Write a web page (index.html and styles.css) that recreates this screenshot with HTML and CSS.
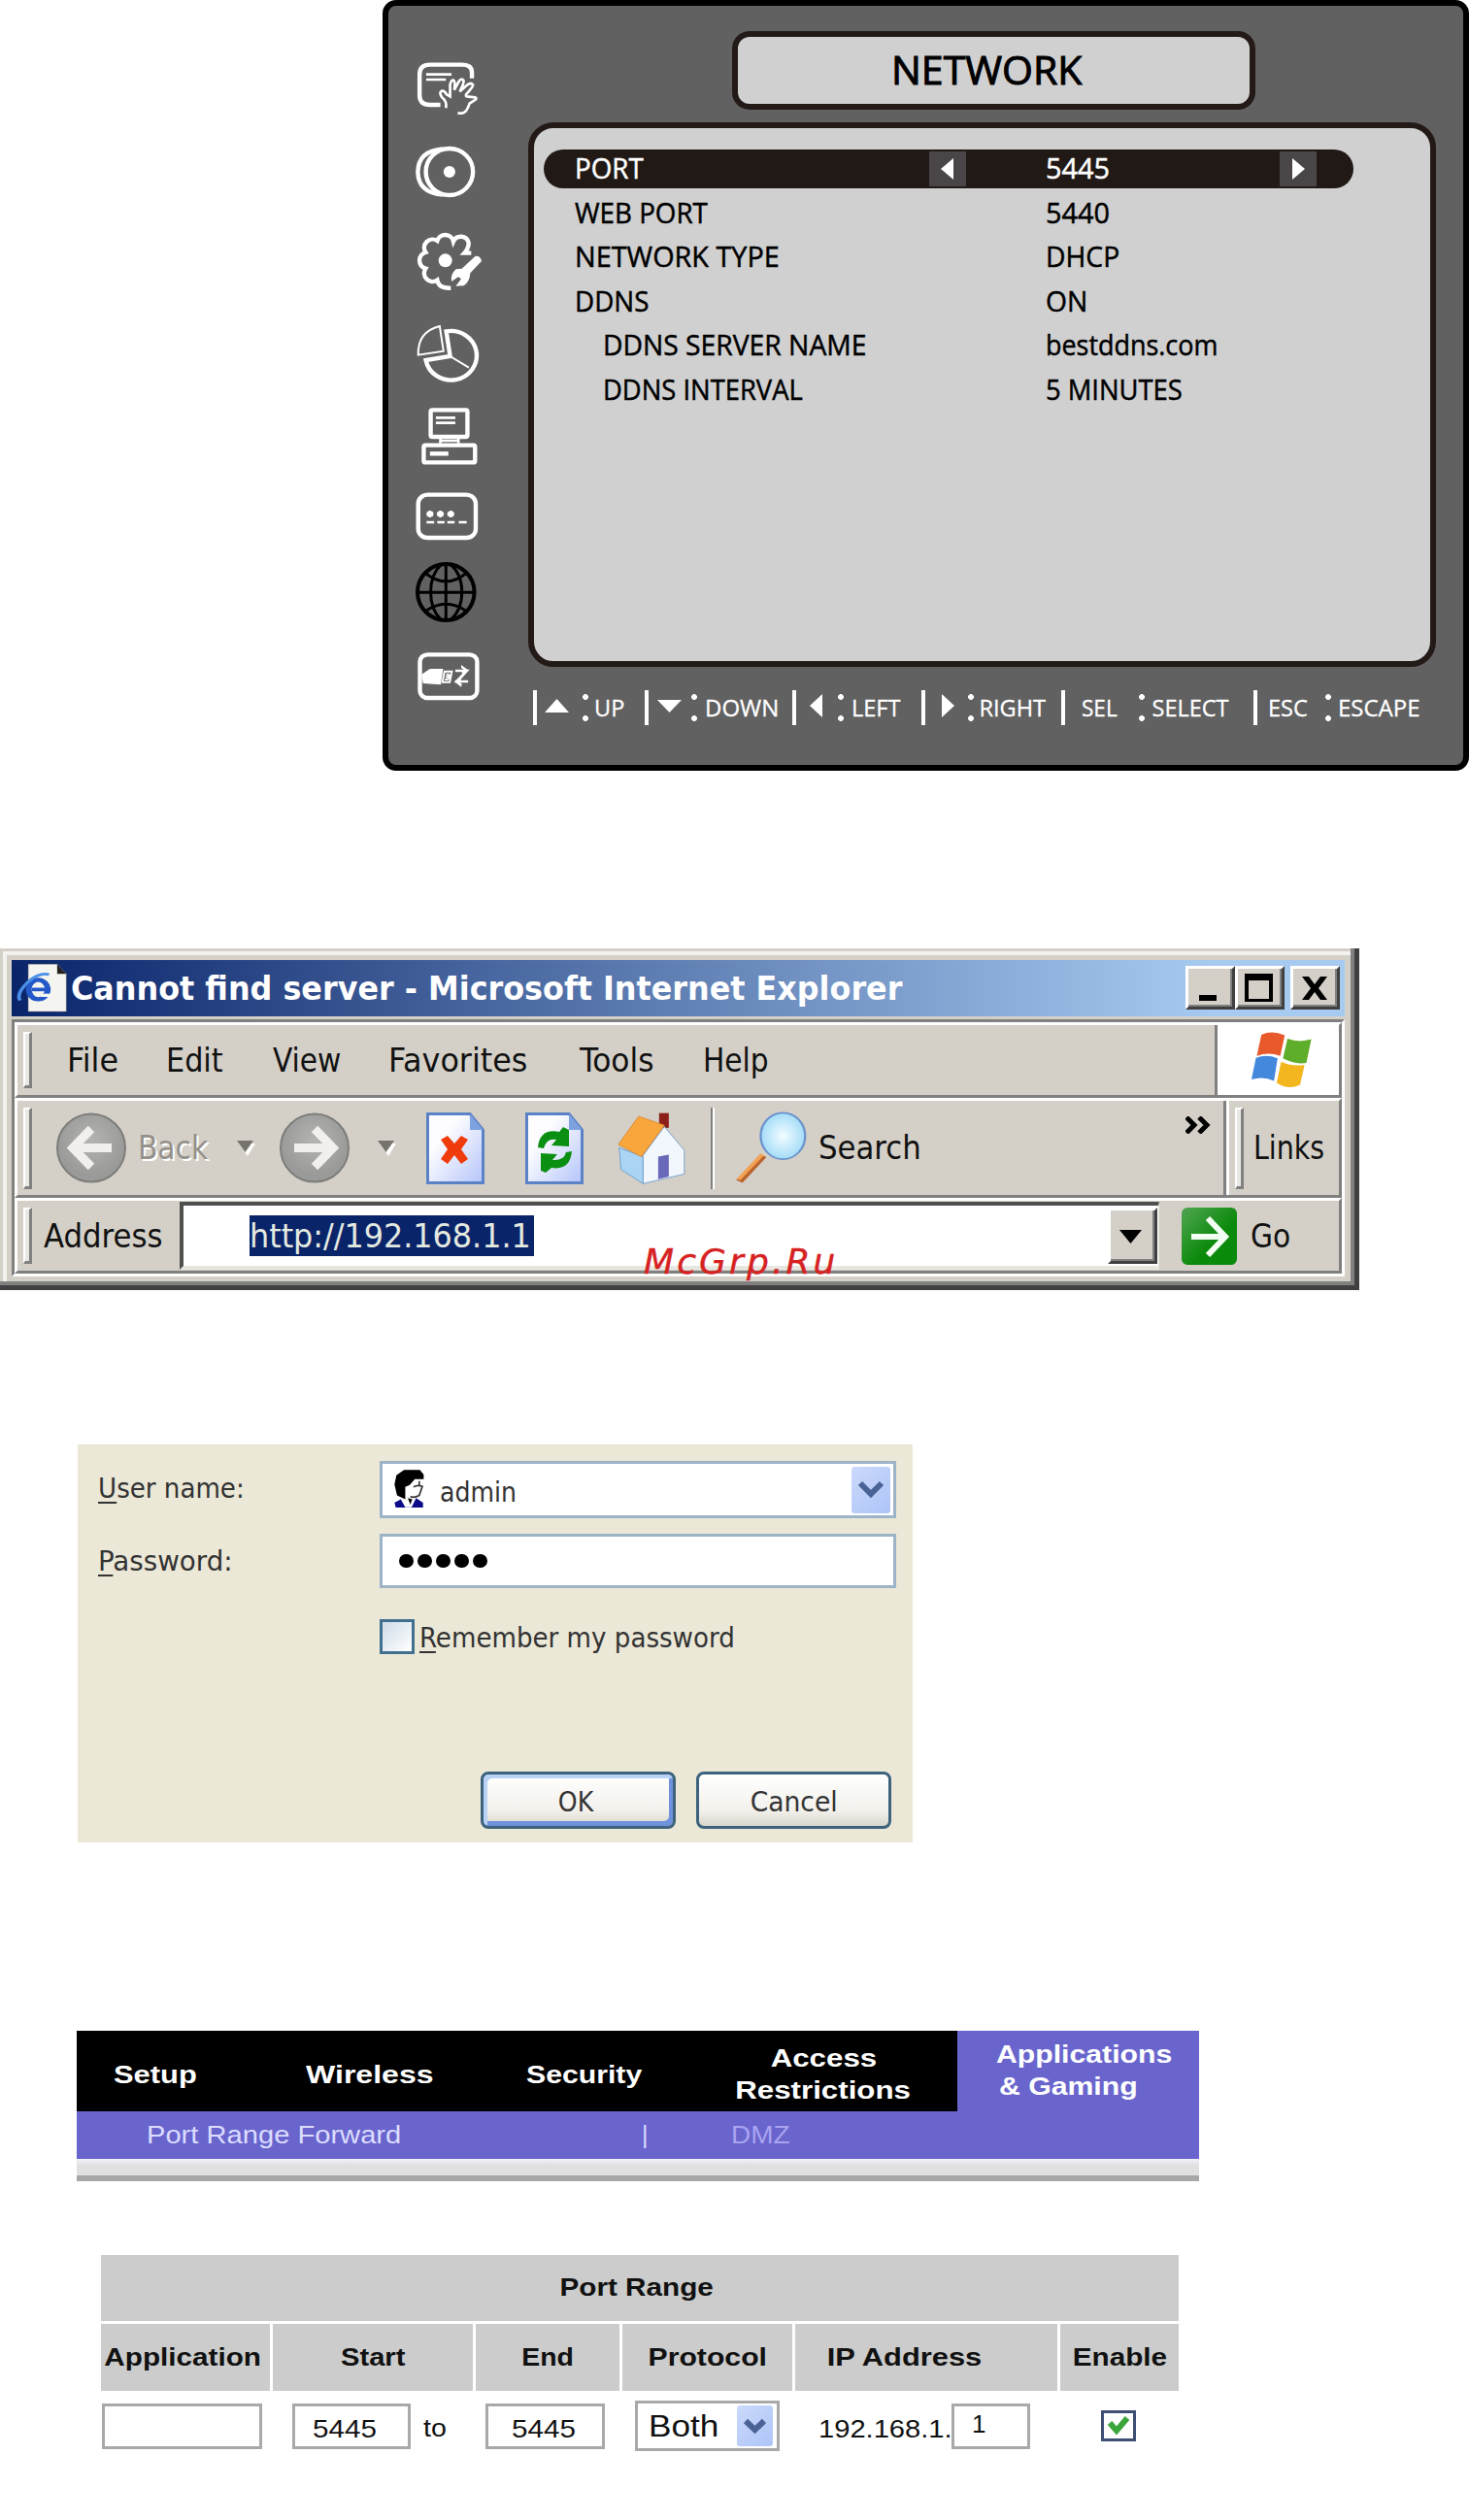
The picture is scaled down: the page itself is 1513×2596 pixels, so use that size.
FILE: index.html
```
<!DOCTYPE html>
<html>

	<head>
		<meta charset="UTF-8">
		<title>Network setup</title>
		<link rel="stylesheet" href="styles.css">
	</head>

	<body>
		<div id="osd">
			<div class="side">
				<svg class="ico i1" viewBox="100 189 210 171" preserveAspectRatio="none">
					<path class="w4" d="M271 242V224Q271 200 242 200H150Q120 200 120 230V295Q120 324 150 324H180" />
					<path class="w3" d="M139 230H212M139 246H196" />
					<path class="w3" d="M196 334Q200 314 184 300Q175 284 184 281Q192 279 198 292L208 298V262Q211 246 218 248Q224 252 220 278L233 252Q241 240 247 249Q249 255 236 283L258 262Q268 254 274 262Q276 267 254 292Q252 300 262 299L280 301Q288 305 277 311L264 320Q256 348 243 350H230" />
				</svg>
				<svg class="ico i2" viewBox="100 450 210 162" preserveAspectRatio="none">
					<ellipse class="w4" cx="206" cy="531" rx="68" ry="72" />
					<path class="w4" d="M187 460Q116 466 115 531Q116 596 187 602" />
					<ellipse class="fw" cx="206" cy="531" rx="17" ry="18" />
				</svg>
				<svg class="ico i3" viewBox="32 555 225 198">
					<path class="w4" d="M213 632H192Q206 616 205 600A25 25 0 0 0 158 596A26 26 0 0 0 108 594A26 26 0 0 0 72 630A26 26 0 0 0 72 680A26 26 0 0 0 108 716Q112 742 150 740" />
					<circle class="fw" cx="133" cy="655" r="21" />
					<path class="fw" d="M226 641Q242 640 245 657L210 694Q208 722 190 733L165 734L182 712L173 706L152 720Q148 698 166 682L184 680Z" />
				</svg>
				<svg class="ico i4" viewBox="100 999 210 186" preserveAspectRatio="none">
					<path class="w2" d="M178 1008L189 1085L116 1097Q114 1025 178 1008Z" />
					<path class="w4" d="M197 1024A74 76 0 1 1 138 1113L208 1101Z" />
					<path class="w2" d="M208 1101L262 1136" />
				</svg>
				<svg class="ico i5" viewBox="100 57 210 183" preserveAspectRatio="none">
					<rect class="w4" x="152" y="67" width="106" height="83" rx="5" />
					<path class="w3" d="M167 91H223M167 107H223M180 152V170M232 152V170M180 162H232" />
					<rect class="w4" x="132" y="176" width="148" height="53" rx="5" />
					<path class="w4" d="M150 202H203" />
				</svg>
				<svg class="ico i6" viewBox="100 318 210 156" preserveAspectRatio="none">
					<rect class="w4" x="116" y="329" width="166" height="133" rx="27" />
					<path class="w3" d="M140 414H162M171 414H192M200 414H221M233 414H256M150 378V399M141 384L159 393M159 384L141 393M180 378V399M171 384L189 393M189 384L171 393M210 378V399M201 384L219 393M219 384L201 393" />
				</svg>
				<svg class="ico i7" viewBox="100 534 210 192" preserveAspectRatio="none">
					<ellipse cx="196" cy="630" rx="82" ry="87" />
					<path d="M196 542V718M113 631H279M182 545Q152 575 152 630Q152 685 182 715M210 545Q242 575 242 630Q242 685 210 715M137 571Q196 623 255 571M137 689Q196 645 255 689" />
				</svg>
				<svg class="ico i8" viewBox="100 813 210 156" preserveAspectRatio="none">
					<rect class="w4" x="121" y="823" width="165" height="134" rx="22" />
					<path class="fw" d="M126 884L150 867H188L181 916L130 912Z" />
					<path class="w2" d="M192 875H213L207 908H186ZM197 884L206 884M195 892H205M193 900H202M206 884L202 900" />
					<path class="w3" d="M223 873H256L228 906H260" />
					<path class="fw" d="M240 855L262 872L244 886L242 878L250 872L240 864ZM238 890L220 906L240 923L242 914L234 906L240 900Z" />
				</svg>
			</div>
			<div class="main">
				<div class="title">NETWORK</div>
				<div class="panel">
					<div class="row on">
						<span class="name"><span class="s92">PORT</span></span>
						<span class="arrow"><svg width="38" height="36"><path d="M12 18L25 7V29Z" /></svg></span>
						<span class="val"><span class="s96">5445</span></span>
						<span class="arrow"><svg width="38" height="36"><path d="M26 18L13 7V29Z" /></svg></span>
					</div>
					<div class="row"><span class="name"><span class="s92">WEB PORT</span></span><span class="val"><span class="s96">5440</span></span></div>
					<div class="row"><span class="name"><span class="s96">NETWORK TYPE</span></span><span class="val"><span class="s94">DHCP</span></span></div>
					<div class="row"><span class="name"><span class="s92">DDNS</span></span><span class="val"><span class="s94">ON</span></span></div>
					<div class="row sub"><span class="name"><span class="s94">DDNS SERVER NAME</span></span><span class="val"><span class="s90">bestddns.com</span></span></div>
					<div class="row sub"><span class="name"><span class="s91">DDNS INTERVAL</span></span><span class="val"><span class="s91">5 MINUTES</span></span></div>
				</div>
				<div class="keys">
					<div class="key k1"><svg width="26" height="36"><path d="M0 23L12.500 9L25 23Z" /></svg><i></i><span>UP</span></div>
					<div class="key k2"><svg width="26" height="36"><path d="M0 10L12.500 23L25 10Z" /></svg><i></i><span class="s102">DOWN</span></div>
					<div class="key k3"><svg width="26" height="36"><path d="M0 16L13 4V28Z" /></svg><i></i><span>LEFT</span></div>
					<div class="key k4"><svg width="26" height="36"><path d="M13 16L0 4V28Z" /></svg><i></i><span>RIGHT</span></div>
					<div class="key k5"><span class="s96">SEL</span><i></i><span>SELECT</span></div>
					<div class="key k6"><span>ESC</span><i></i><span class="s102">ESCAPE</span></div>
				</div>
			</div>
		</div>

		<div id="ie">
			<div class="bar">
				<svg class="page" viewBox="36 64 116 156" preserveAspectRatio="none">
					<path fill="#f4f4f0" stroke="#8a8a80" d="M62 68H126L146 98V214H62Z" />
					<path fill="#222" d="M126 68L146 98H126Z" />
					<ellipse cx="84" cy="146" rx="21" ry="30" fill="none" stroke="#2458c8" stroke-width="13" />
					<path fill="none" stroke="#f4f4f0" stroke-width="10" d="M90 164H116" />
					<path fill="none" stroke="#2458c8" stroke-width="11" d="M70 146H108" />
					<path fill="none" stroke="#4a90e8" stroke-width="8" d="M44 180Q34 160 62 122Q88 92 108 100" />
				</svg>
				<span class="cap s107">Cannot find server - Microsoft Internet Explorer</span>
				<span class="btns">
					<span class="btn"><svg width="46" height="40"><path d="M11 27H29V33H11Z" /></svg></span>
					<span class="btn"><svg width="46" height="40"><path d="M7 5H36V34H7ZM11 12V31H32V12Z" fill-rule="evenodd" /></svg></span>
					<span class="btn close"><svg width="46" height="40"><path d="M9 8H16L22 16L28 8H35L26 20L35 32H28L22 24L16 32H9L18 20Z" /></svg></span>
				</span>
			</div>
			<div class="client">
				<div class="menu">
					<b class="grip"></b>
					<span class="m1"><span class="s107">File</span></span>
					<span class="m2"><span class="s102">Edit</span></span>
					<span class="m3">View</span>
					<span class="m4"><span class="s107">Favorites</span></span>
					<span class="m5"><span class="s105">Tools</span></span>
					<span class="m6">Help</span>
					<span class="flag">
						<svg width="64" height="60" viewBox="1282 272 138 182" preserveAspectRatio="none">
							<path fill="#e8592b" d="M1306 284Q1330 268 1358 286L1348 350Q1322 336 1296 350Z" />
							<path fill="#5fae2b" d="M1364 296Q1390 310 1417 298L1406 372Q1380 378 1354 358Z" />
							<path fill="#4388dc" d="M1294 356Q1318 344 1342 358L1334 428Q1310 412 1284 424Z" />
							<path fill="#f3b61f" d="M1350 368Q1376 384 1402 378L1392 440Q1366 458 1340 434Z" />
						</svg>
					</span>
				</div>
				<div class="tools">
					<b class="grip"></b>
					<svg class="round" viewBox="0 0 72 73"><circle cx="36" cy="36.500" r="35" /><path d="M57 36.500H18M36 17L17 36.500L36 56" /></svg>
					<span class="back">Back</span>
					<svg class="down" width="19" height="16"><path d="M2 3H19L11 16Z" fill="#fff" /><path d="M0 0H17L8.500 12Z" /></svg>
					<svg class="round fwd" viewBox="0 0 72 73"><circle cx="36" cy="36.500" r="35" /><path d="M15 36.500H54M36 17L55 36.500L36 56" /></svg>
					<svg class="down" width="19" height="16"><path d="M2 3H19L11 16Z" fill="#fff" /><path d="M0 0H17L8.500 12Z" /></svg>
					<svg class="doc stop" viewBox="0 0 60 74">
						<path class="paper" d="M1.500 1.500H45L58.500 18V72.500H1.500Z" /><path class="fold" d="M45 1.500V18H58.500Z" />
						<path d="M15 28L22 24L29 32L36 24L43 28L36 38L43 48L36 53L29 44L22 53L15 48L22 38Z" fill="#f03c0c" />
					</svg>
					<svg class="doc fresh" viewBox="0 0 60 74">
						<path class="paper" d="M1.500 1.500H45L58.500 18V72.500H1.500Z" /><path class="fold" d="M45 1.500V18H58.500Z" />
						<path d="M13 36Q15 16 35 20L39 15L45 18V35L27 34L32 28Q22 26 19 37ZM48 40Q46 60 27 57L21 62L16 60V42L33 43L28 49Q40 50 42 41Z" fill="#0b8f12" />
					</svg>
					<svg class="home" viewBox="1380 516 160 236" preserveAspectRatio="none">
						<path fill="#8c1f1a" d="M1476 524H1498V570H1476Z" />
						<path fill="#a9d4f3" stroke="#5f94c8" stroke-width="2" d="M1386 632L1440 660V744L1390 700Z" />
						<path fill="#f2f6fd" stroke="#5f94c8" stroke-width="2" d="M1440 744V656L1488 566L1533 640V714L1440 744Z" />
						<path fill="#f9a63c" stroke="#d9822a" stroke-width="2" d="M1384 622L1430 534L1488 562L1436 660Z" />
						<path fill="#6a68b8" d="M1474 660L1498 654V722L1474 730Z" />
					</svg>
					<b class="sep"></b>
					<svg class="glass" viewBox="120 524 166 232" preserveAspectRatio="none">
						<path d="M186 664L132 744" stroke="#b9652c" stroke-width="17" />
						<path d="M184 660L130 738" stroke="#f4a254" stroke-width="9" />
						<ellipse cx="230" cy="603" rx="50" ry="72" fill="url(#lens)" stroke="#6b93cc" stroke-width="5" />
						<defs>
							<radialGradient id="lens"><stop offset="0" stop-color="#f2fdff" /><stop offset="1" stop-color="#a4dcf8" /></radialGradient>
							<linearGradient id="paper" x2="1" y2="1"><stop offset=".3" stop-color="#fdfdff" /><stop offset="1" stop-color="#b4c4fa" /></linearGradient>
							<radialGradient id="ball" cy=".4"><stop offset="0" stop-color="#b4b4b2" /><stop offset="1" stop-color="#9a9a98" /></radialGradient>
						</defs>
					</svg>
					<span class="search"><span class="s104">Search</span></span>
					<svg class="more" width="27" height="18"><path d="M1 1L9 9L1 17M14 1L22 9L14 17" /></svg>
					<span class="links"><b class="grip"></b><span class="s96">Links</span></span>
				</div>
				<div class="addr">
					<b class="grip"></b>
					<span class="lab"><span class="s104">Address</span></span>
					<span class="url">
						<span class="sel"><span class="s107">http://192.168.1.1</span></span>
						<span class="btn drop"><svg width="44" height="50"><path d="M9 20H32L20.500 34Z" /></svg></span>
					</span>
					<span class="goicon"><svg width="57" height="59"><path d="M10 30H44M27 11L45 30L27 49" /></svg></span>
					<span class="go">Go</span>
				</div>
			</div>
			<div class="mark">McGrp.Ru</div>
		</div>

		<div id="login">
			<div class="line l1">
				<label><span class="s104"><u>U</u>ser name:</span></label>
				<div class="field combo">
					<svg class="user" viewBox="1002 102 98 122" preserveAspectRatio="none">
						<path fill="#0c0c88" d="M1006 206L1026 196L1040 220H1060L1074 192L1096 206V221H1010Z" />
						<path fill="#000" d="M1036 106H1086L1098 120V134H1070L1054 152L1040 158V196L1014 184L1006 150L1012 122Z" />
						<path fill="none" stroke="#333" stroke-width="5" d="M1066 158Q1080 150 1094 156L1084 184Q1070 192 1056 188M1084 140V152" />
						<path fill="#000" d="M1048 192L1056 212L1062 196Z" />
					</svg>
					<span class="admin">admin</span>
					<span class="pick"><svg width="40" height="48"><path d="M9 17L20 28L31 17" /></svg></span>
				</div>
			</div>
			<div class="line l2">
				<label><span class="s110"><u>P</u>assword:</span></label>
				<div class="field dots"><i></i><i></i><i></i><i></i><i></i></div>
			</div>
			<div class="remember"><b></b><span class="s104"><u>R</u>emember my password</span></div>
			<div class="buttons">
				<span class="xp ok"><span>OK</span></span>
				<span class="xp"><span class="s105 mid">Cancel</span></span>
			</div>
		</div>

		<div id="router">
			<div class="nav">
				<span class="n1"><span class="s116">Setup</span></span>
				<span class="n2"><span class="s121">Wireless</span></span>
				<span class="n3"><span class="s114">Security</span></span>
				<span class="n4"><span class="s118 mid">Access</span><br><span class="s118 mid">Restrictions</span></span>
				<span class="n5"><span class="s114">Applications</span><br><span class="s114 amp">&amp; Gaming</span></span>
			</div>
			<div class="subnav">
				<span class="s1"><span class="s116">Port Range Forward</span></span>
				<span class="s2">|</span>
				<span class="s3"><span class="s112">DMZ</span></span>
			</div>
			<div class="strip"></div>
			<div class="table">
				<div class="th all"><span class="s112 mid">Port Range</span></div>
				<div class="th app-h"><span class="s112 mid">Application</span></div>
				<div class="th"><span class="s110 mid">Start</span></div>
				<div class="th"><span class="s107 mid">End</span></div>
				<div class="th"><span class="s114 mid">Protocol</span></div>
				<div class="th ip"><span class="s116 mid">IP Address</span></div>
				<div class="th"><span class="s112 mid">Enable</span></div>
			</div>
			<div class="form">
				<span class="in app"></span>
				<span class="in start"><span class="s114">5445</span></span>
				<span class="to"><span class="s110">to</span></span>
				<span class="in end"><span class="s114">5445</span></span>
				<span class="in both"><span class="s110">Both</span><span class="pick"><svg width="37" height="42"><path d="M9 16L18.500 25L28 16" /></svg></span></span>
				<span class="ipt"><span class="s112">192.168.1.</span></span>
				<span class="in last">1</span>
				<span class="check"><svg width="30" height="26"><path d="M6 10L13 18L24 5" /></svg></span>
			</div>
		</div>
	</body>

</html>
```
FILE: styles.css
```
* {
	margin: 0;
	padding: 0;
	box-sizing: border-box;
}

body {
	width: 1513px;
	height: 2596px;
	background: #fff;
	white-space: nowrap;
}

svg {
	display: block;
	flex: none;
}

/* narrower and wider lettering */
[class*="s9"],
[class*="s1"]:not(.s1) {
	display: inline-block;
	transform-origin: left;
}

.s90 { transform: scaleX(.897); }
.s91 { transform: scaleX(.912); }
.s92 { transform: scaleX(.925); }
.s94 { transform: scaleX(.942); }
.s96 { transform: scaleX(.96); }
.s102 { transform: scaleX(1.02); }
.s104 { transform: scaleX(1.037); }
.s105 { transform: scaleX(1.055); }
.s107 { transform: scaleX(1.072); }
.s110 { transform: scaleX(1.1); }
.s112 { transform: scaleX(1.12); }
.s114 { transform: scaleX(1.14); }
.s116 { transform: scaleX(1.165); }
.s118 { transform: scaleX(1.18); }
.s121 { transform: scaleX(1.21); }

span[class*="s1"].mid {
	transform-origin: center;
}

/* recorder menu */
#osd {
	width: 1119px;
	height: 794px;
	margin-left: 394px;
	border: 6px solid #000;
	border-radius: 14px;
	background: #616161;
	display: flex;
	font-family: "Open Sans", "Noto Sans", sans-serif;
	-webkit-text-stroke: .5px;
}

.side {
	width: 144px;
	padding: 57px 0 0 25px;
}

.ico {
	width: 75px;
}

.ico * {
	fill: none;
	stroke: none;
	vector-effect: non-scaling-stroke;
}

.ico .w4 {
	stroke: #fff;
	stroke-width: 4.4px;
}

.ico .w3 {
	stroke: #fff;
	stroke-width: 2.7px;
}

.ico .w2 {
	stroke: #fff;
	stroke-width: 2px;
}

.ico .fw {
	fill: #fff;
}

.i1 { height: 57px; }
.i2 { height: 54px; margin-top: 30px; }
.i3 { height: 66px; margin-top: 31px; }
.i4 { height: 62px; margin-top: 32px; }
.i5 { height: 61px; margin-top: 24px; }
.i6 { height: 52px; margin-top: 26px; }
.i7 { height: 64px; margin-top: 20px; }
.i8 { height: 52px; margin-top: 29px; }

.i7 * {
	stroke: #000;
	stroke-width: 3px;
}

.i7 ellipse {
	stroke-width: 4px;
}

.main {
	padding-top: 26px;
}

.title {
	width: 539px;
	height: 81px;
	margin-left: 210px;
	border: 6px solid #231a18;
	border-radius: 18px;
	background: #d0d0d0;
	font-size: 41px;
	line-height: 66px;
	padding-left: 158px;
	-webkit-text-stroke: 1px;
}

.panel {
	width: 935px;
	height: 561px;
	margin-top: 13px;
	border: 6px solid #231a18;
	border-radius: 26px;
	background: #d0d0d0;
	padding: 22px 0 0 10px;
}

.row {
	width: 834px;
	height: 40px;
	margin-bottom: 5.6px;
	padding-left: 31.500px;
	display: flex;
	align-items: center;
	border-radius: 20px;
	font-size: 30px;
	line-height: 37px;
	padding-bottom: 3px;
}

.name {
	width: 485px;
}

.sub .name {
	padding-left: 29px;
}

.on {
	background: #211916;
	color: #fff;
}

.on .name {
	width: 365.500px;
}

.on .val {
	width: 241px;
	margin-left: 81.500px;
}

.arrow {
	background: #4a4647;
	position: relative;
	top: 1px;
}

.arrow path {
	fill: #fff;
}

.keys {
	display: flex;
	margin: 24px 0 0 5px;
	color: #fff;
	font-size: 23.5px;
	line-height: 36px;
	-webkit-text-stroke: .3px;
}

.key {
	display: grid;
	height: 36px;
	border-left: 4px solid #fff;
}

.key svg {
	fill: #fff;
}

.key i {
	width: 6px;
	height: 28px;
	margin-top: 4px;
	background: radial-gradient(circle at 3px 3px, #fff 2.6px, transparent 3.2px) 0 0 / 6px 22px;
}

.k1 { width: 115px; padding-left: 8px; grid-template-columns: 39px 12px 1fr; }
.k2 { width: 152px; padding-left: 9px; grid-template-columns: 35px 14px 1fr; }
.k3 { width: 132.500px; padding-left: 14px; grid-template-columns: 29px 14px 1fr; }
.k4 { width: 144px; padding-left: 17px; grid-template-columns: 27px 12px 1fr; }
.k5 { width: 198.500px; padding-left: 17px; grid-template-columns: 59px 14px 1fr; }
.k6 { width: 190px; padding-left: 11px; grid-template-columns: 59px 13px 1fr; }

/* browser window */
#ie {
	position: relative;
	width: 1400px;
	height: 352px;
	margin-top: 183px;
	padding: 12px 15px 0 12px;
	background: #d4d0c8;
	box-shadow: inset -5px -5px #404040, inset -9px -9px #808080, inset 3px 3px #d4d0c8, inset 7px 7px #f4f2ee;
	font-family: "DejaVu Sans Condensed", "DejaVu Sans", sans-serif;
	font-size: 33px;
	color: #111;
}

.bar {
	height: 58px;
	display: flex;
	align-items: center;
	padding: 0 5px;
	background: linear-gradient(90deg, #0a246a, #a6caf0 90%);
}

.page {
	width: 54px;
	height: 52px;
}

.cap {
	font-size: 33px;
	font-weight: bold;
	color: #fff;
	margin-left: 2px;
}

.btns {
	display: flex;
	margin-left: auto;
	margin-top: -1px;
}

.btn {
	width: 51px;
	height: 45px;
	background: #d4d0c8;
	border: 3px solid;
	border-color: #fff #404040 #404040 #fff;
	box-shadow: inset -2px -2px #808080;
}

.close {
	margin-left: 6px;
}

.client {
	margin-top: 3px;
	height: 265px;
	border: 3px solid;
	border-color: #808080 #fff #fff #808080;
}

.client > div {
	display: flex;
	align-items: center;
	border: 3px solid #808080;
	border-top-color: #fff;
	border-left-color: #fff;
}

.client .menu {
	height: 78px;
}

.client .tools {
	height: 103px;
}

.client .addr {
	height: 78px;
}

.grip {
	flex: none;
	width: 9px;
	height: 58px;
	margin-left: 6px;
	background: #e9e7e2;
	border: solid #fff;
	border-width: 2px 0 0 2px;
	border-right: 3px solid #808080;
	border-bottom: 3px solid #808080;
}

.m1 { margin-left: 36px; width: 102px; }
.m2 { width: 110px; }
.m3 { width: 119px; }
.m4 { width: 197px; }
.m5 { width: 127px; }

.flag {
	width: 128px;
	height: 72px;
	margin-left: auto;
	padding: 6px 0 0 34px;
	background: #fff;
	border-left: 3px solid #808080;
}

.tools .grip {
	height: 84px;
}

.round {
	width: 72px;
	height: 73px;
	margin-left: 25px;
}

.round circle {
	fill: url(#ball);
	stroke: #7d7d7b;
	stroke-width: 2;
}

.round path {
	fill: none;
	stroke: #f2f0ec;
	stroke-width: 9;
}

.back {
	color: #95918a;
	text-shadow: 2px 2px #fff;
	margin-left: 12px;
	width: 102px;
}

.down {
	fill: #77746e;
}

.round.fwd {
	margin: 0 29px 0 25px;
}

.doc {
	width: 60px;
	height: 74px;
}

.paper {
	fill: url(#paper);
	stroke: #5b82c4;
	stroke-width: 3;
}

.fold {
	fill: #7ea2e0;
}

.stop { margin-left: 31px; }
.fresh { margin-left: 42px; }

.home {
	width: 73px;
	height: 78px;
	margin-left: 34px;
}

.sep {
	width: 4px;
	height: 84px;
	margin-left: 24px;
	background: linear-gradient(90deg, #808080 50%, #fff 50%);
}

.glass {
	width: 76px;
	height: 77px;
	margin-left: 20px;
}

.search {
	margin-left: 11px;
	width: 378px;
}

.more {
	align-self: flex-start;
	margin-top: 16px;
	fill: none;
	stroke: #000;
	stroke-width: 5;
}

.links {
	display: flex;
	align-items: center;
	height: 97px;
	margin-left: auto;
	width: 119px;
	border-left: 3px solid #808080;
	box-shadow: inset 3px 0 #fff;
}

.links .grip {
	margin-right: 10px;
	margin-left: 9px;
}

.lab {
	margin-left: 12px;
	width: 140px;
}

.url {
	width: 1009px;
	height: 70px;
	display: flex;
	align-items: center;
	background: #fff;
	border: 4px solid;
	border-color: #505050 #e8e6e0 #e8e6e0 #505050;
	border-right-width: 1px;
}

.sel {
	margin-left: 68px;
	width: 293px;
	height: 42px;
	line-height: 44px;
	background: #0a246a;
	color: #e4eae0;
	overflow: hidden;
}

.drop {
	margin-left: auto;
	margin-right: 1px;
	height: 58px;
}

.goicon {
	margin-left: 23px;
	border-radius: 6px;
	background: linear-gradient(135deg, #52a552, #0b8a0b 60%);
}

.goicon path {
	fill: none;
	stroke: #f4fff4;
	stroke-width: 6;
}

.go {
	margin-left: 14px;
}

.mark {
	position: absolute;
	left: 663px;
	top: 302px;
	font-family: "DejaVu Sans", sans-serif;
	font-size: 36px;
	font-style: italic;
	letter-spacing: 3.1px;
	color: #d62222;
	-webkit-text-stroke: .4px;
}

/* login box */
#login {
	width: 860px;
	height: 410px;
	margin: 159px 0 0 80px;
	padding-top: 17px;
	background: #ebe8d7;
	font-family: "DejaVu Sans Condensed", "DejaVu Sans", sans-serif;
	font-size: 28px;
	color: #333;
}

u {
	text-underline-offset: 4px;
	text-decoration-thickness: 2px;
}

.line {
	display: flex;
	align-items: center;
}

.line label {
	width: 311px;
	padding: 0 0 2px 21px;
}

.field {
	width: 532px;
	height: 59px;
	background: #fff;
	border: 3px solid #9db4c8;
	display: flex;
	align-items: center;
}

.l2 {
	margin-top: 16px;
}

.l2 .field {
	height: 56px;
}

.l2 label {
	padding-bottom: 0;
}

.user {
	width: 32px;
	height: 41px;
	margin: 0 16px 2px 11px;
}

.admin {
	padding-top: 6px;
}

.pick {
	margin-left: auto;
	background: linear-gradient(135deg, #cbd9fb, #aec5f8);
	border-radius: 3px;
}

.combo .pick {
	margin-right: 3px;
}

.pick path {
	fill: none;
	stroke: #4a6396;
	stroke-width: 6;
}

.dots {
	padding-left: 17px;
	gap: 4.500px;
}

.dots i {
	width: 14.500px;
	height: 14.500px;
	border-radius: 50%;
	background: #000;
}

.remember {
	display: flex;
	align-items: center;
	margin: 32px 0 0 311px;
	height: 36px;
}

.remember span {
	padding-top: 3px;
}

.remember b {
	width: 36px;
	height: 36px;
	margin-right: 5px;
	border: 3px solid #41708f;
	background: linear-gradient(135deg, #cfdce8, #fff);
}

.buttons {
	display: flex;
	gap: 21px;
	margin: 121px 0 0 415px;
}

.xp {
	width: 201px;
	height: 59px;
	line-height: 57px;
	text-align: center;
	border: 3px solid #3d637f;
	border-radius: 8px;
	background: linear-gradient(#fff, #f2f1ec 70%, #d9d6cb);
}

.ok {
	padding-right: 5px;
	box-shadow: inset 4px 4px #b9d2f6, inset -4px -5px #6f92dc;
}

/* router page */
#router {
	width: 1156px;
	margin: 194px 0 0 79px;
	font-family: "Liberation Sans", Arial, sans-serif;
	font-size: 26.500px;
	color: #111;
}

.nav {
	display: flex;
	height: 83px;
	background: #000;
	color: #fff;
	font-weight: bold;
	line-height: 33px;
}

.nav > span {
	padding-top: 29px;
}

.n1 { margin-left: 38px; width: 198px; }
.n2 { width: 227px; }
.n3 { width: 207px; }

.nav .n4 {
	width: 198px;
	text-align: center;
	padding-top: 12px;
}

.nav .n5 {
	flex: 1;
	margin-left: 39px;
	padding: 8px 0 0 40px;
	background: #6965cd;
}

.amp {
	margin-left: 3px;
}

.subnav {
	display: flex;
	height: 49px;
	line-height: 48px;
	background: #6965cd;
	color: #dcdcff;
	font-size: 25px;
}

.subnav .s1 { margin-left: 72px; width: 510px; }
.s2 { width: 92px; }
.s3 { color: #a9a3f0; }

.strip {
	height: 23px;
	background: linear-gradient(#f2f1fb, #e0e0e0 40%);
	border-bottom: 6px solid #a8a8a8;
}

.table {
	display: grid;
	grid-template-columns: 174px 206px 148px 175px 270px 122px;
	gap: 3px;
	width: 1110px;
	margin: 76px 0 0 25px;
}

.th {
	height: 69px;
	line-height: 68px;
	background: #ccc;
	font-weight: bold;
	text-align: center;
}

.app-h {
	padding-right: 6px;
}

.th.ip {
	padding-right: 45px;
}

.all {
	grid-column: 1 / 7;
	height: 68px;
	padding-right: 7px;
	line-height: 66px;
}

.form {
	display: flex;
	align-items: center;
	height: 52px;
	margin: 10px 0 0 26px;
	font-size: 26px;
}

.in {
	height: 47px;
	border: 3px solid #a9a9a9;
	line-height: 46px;
}

.app { width: 165px; }
.start { width: 122px; margin-left: 31px; padding-left: 18px; }
.to { width: 62px; padding: 5px 0 0 13px; }
.end { width: 123px; margin-left: 15px; padding-left: 24px; }

.both {
	display: flex;
	align-items: center;
	width: 149px;
	height: 52px;
	margin-left: 31px;
	padding: 0 4px 0 11px;
	font-size: 32px;
}

.ipt { margin-left: 40px; width: 137px; padding-top: 6px; }
.last { width: 81px; padding-left: 18px; line-height: 36px; }

.check {
	margin-left: 73px;
	width: 36px;
	height: 32px;
	border: 3px solid #3d4f72;
}

.check path {
	fill: none;
	stroke: #3aa53a;
	stroke-width: 6;
}
```
